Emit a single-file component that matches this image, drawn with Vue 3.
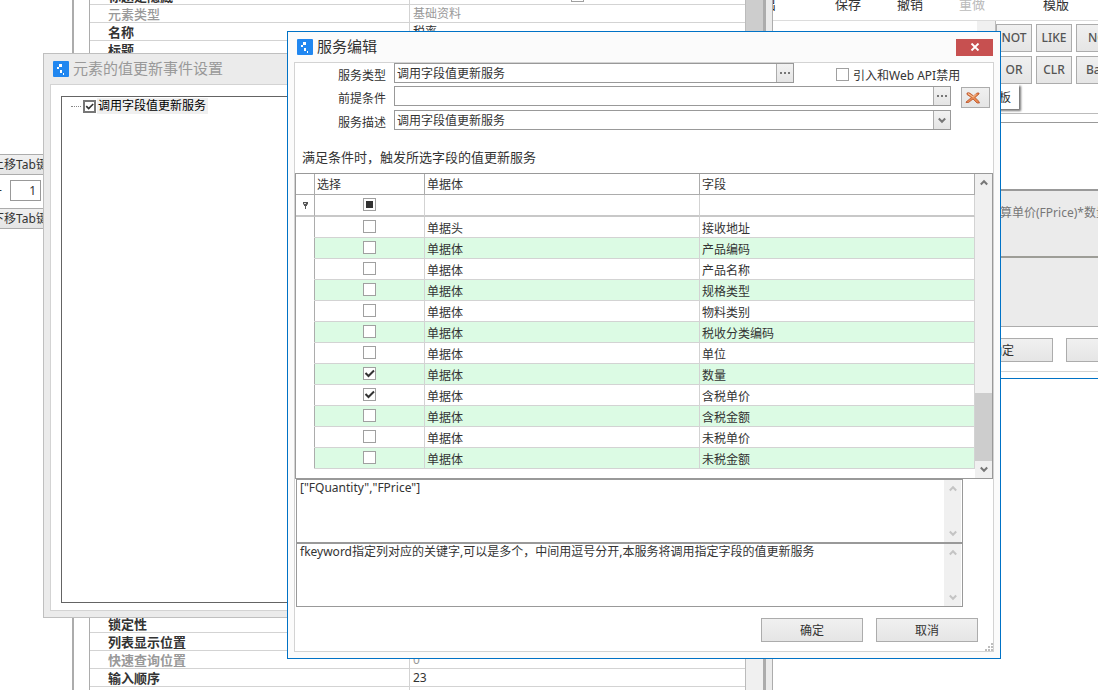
<script setup>
import { ref } from 'vue'

const topProps = [
  { name: '标题是隐藏', value: '', tick: true },
  { name: '元素类型', value: '基础资料', muted: true, light: true },
  { name: '名称', value: '税率' },
  { name: '标题', value: '' }
]
const bottomProps = [
  { name: '锁定性', value: '' },
  { name: '列表显示位置', value: '' },
  { name: '快速查询位置', value: '0', muted: true },
  { name: '输入顺序', value: '23' },
  { name: '', value: '' }
]
const fields = ref([
  { entity: '单据头', field: '接收地址', on: false },
  { entity: '单据体', field: '产品编码', on: false },
  { entity: '单据体', field: '产品名称', on: false },
  { entity: '单据体', field: '规格类型', on: false },
  { entity: '单据体', field: '物料类别', on: false },
  { entity: '单据体', field: '税收分类编码', on: false },
  { entity: '单据体', field: '单位', on: false },
  { entity: '单据体', field: '数量', on: true },
  { entity: '单据体', field: '含税单价', on: true },
  { entity: '单据体', field: '含税金额', on: false },
  { entity: '单据体', field: '未税单价', on: false },
  { entity: '单据体', field: '未税金额', on: false }
])
const serviceType = ref('调用字段值更新服务')
const condition = ref('')
const description = ref('调用字段值更新服务')
const disabledForApi = ref(false)
const treeChecked = ref(true)
const keys = ref('["FQuantity","FPrice"]')
const help = ref('fkeyword指定列对应的关键字,可以是多个，中间用逗号分开,本服务将调用指定字段的值更新服务')
</script>

<template>
  <div class="desktop">
    <div class="workspace">
      <aside class="tab-pane">
        <button class="btn tab-btn">上移Tab键</button>
        <div class="spin"><span>-</span><input type="text" value="1" aria-label="Tab"></div>
        <button class="btn tab-btn">下移Tab键</button>
      </aside>
      <div class="props">
        <div>
          <div v-for="p in topProps" :key="p.name" class="prop" :class="{ muted: p.muted, light: p.light }">
            <div class="pname">{{ p.name }}</div>
            <div class="pvalue">{{ p.value }}<input v-if="p.tick" type="checkbox" class="check" :aria-label="p.name"></div>
          </div>
        </div>
        <div>
          <div v-for="p in bottomProps" :key="p.name" class="prop" :class="{ muted: p.muted }">
            <div class="pname">{{ p.name }}</div>
            <div class="pvalue">{{ p.value }}</div>
          </div>
        </div>
      </div>
      <div class="props-scroll"><div class="props-thumb"></div></div>
      <div class="splitter"></div>
    </div>

    <section class="expr">
      <nav class="tools">
        <button>导出</button>
        <button>保存</button>
        <button>撤销</button>
        <button disabled>重做</button>
        <button class="far">模版</button>
      </nav>
      <div class="expr-head">
        <div class="ops">
          <button class="btn">NOT</button><button class="btn">LIKE</button><button class="btn">NOTIN</button>
          <button class="btn">OR</button><button class="btn">CLR</button><button class="btn">Back</button>
        </div>
        <div class="tip">模板</div>
      </div>
      <div class="expr-edit"></div>
      <div class="expr-text">计算单价(FPrice)*数量</div>
      <div class="expr-note"></div>
      <div class="expr-actions">
        <button class="btn">确定</button>
        <button class="btn">取消</button>
      </div>
    </section>

    <section class="window back">
      <header class="title">
        <svg class="logo" viewBox="0 0 16 16"><rect width="16" height="16" rx="1" fill="#2187f0" /><path d="M6 3h3v3H6zM4 6h2v2H4zM7 9h2v3H7zM10 12h1v2h-1z" fill="#fff" /></svg>
        <h2>元素的值更新事件设置</h2>
      </header>
      <div class="client">
        <div class="tree">
          <label><i class="dots"></i><input v-model="treeChecked" type="checkbox" class="check bold"><span>调用字段值更新服务</span></label>
        </div>
      </div>
    </section>

    <section class="window front">
      <header class="title">
        <svg class="logo" viewBox="0 0 16 16"><rect width="16" height="16" rx="1" fill="#2187f0" /><path d="M6 3h3v3H6zM4 6h2v2H4zM7 9h2v3H7zM10 12h1v2h-1z" fill="#fff" /></svg>
        <h2>服务编辑</h2>
        <button class="close" aria-label="关闭">
          <svg width="10" height="8" viewBox="0 0 10 8"><path d="M1.500 .5 8.500 7.500M8.500 .5 1.500 7.500" stroke="#fff" stroke-width="1.900" /></svg>
        </button>
      </header>
      <div class="client">
        <div class="form">
          <label for="type">服务类型</label>
          <div class="line">
            <div class="combo type"><input id="type" v-model="serviceType" type="text"><button aria-label="选择服务"><i class="ellipsis"></i></button></div>
            <label class="api"><input v-model="disabledForApi" type="checkbox" class="check"><span>引入和Web API禁用</span></label>
          </div>
          <label for="cond">前提条件</label>
          <div class="line">
            <div class="combo"><input id="cond" v-model="condition" type="text"><button aria-label="编辑条件"><i class="ellipsis"></i></button></div>
            <button class="btn clear" aria-label="清除">
              <svg width="16" height="12" viewBox="0 0 16 12"><path d="M2 1Q4 0 6 2l2.500 2L12 1h2v1l-4 3.500 3.500 3.500 1 2h-2.500L8 7 3.500 10.500H1V10l5.500-4.500L2 2.500z" fill="#e9894f" stroke="#b8512a" stroke-width=".8" /><path d="M3 1.500 8.200 5l3.300-3" stroke="#f8c49a" fill="none" /></svg>
            </button>
          </div>
          <label for="desc">服务描述</label>
          <div class="line">
            <div class="combo">
              <select id="desc" v-model="description"><option>调用字段值更新服务</option></select>
              <span class="drop"><svg width="8" height="7" viewBox="0 0 8 7"><path d="M.8 1.500 4 4.800 7.200 1.500" class="chev" /></svg></span>
            </div>
          </div>
        </div>
        <p class="hint">满足条件时，触发所选字段的值更新服务</p>
        <div class="grid">
          <div class="table-area">
            <table>
              <colgroup><col class="c-mark"><col class="c-pick"><col><col></colgroup>
              <thead>
                <tr><th></th><th>选择</th><th>单据体</th><th>字段</th></tr>
                <tr class="filter">
                  <td class="mark"><svg width="7" height="8" viewBox="0 0 7 8"><path d="M1 1h5v2.500H5V5H4v3H3V5H2V3.500H1z" fill="#555" /><path d="M2 2.500h2" stroke="#ddd" /></svg></td>
                  <td class="pick"><input type="checkbox" class="check" aria-label="全选" :indeterminate="true"></td>
                  <td></td><td></td>
                </tr>
              </thead>
              <tbody>
                <tr v-for="f in fields" :key="f.field">
                  <td class="mark"></td>
                  <td class="pick"><input v-model="f.on" type="checkbox" class="check" :aria-label="f.field"></td>
                  <td>{{ f.entity }}</td><td>{{ f.field }}</td>
                </tr>
              </tbody>
            </table>
          </div>
          <div class="bar">
            <svg width="8" height="7" viewBox="0 0 8 7"><path d="M.8 5.500 4 2.200 7.200 5.500" class="chev" /></svg>
            <div class="thumb"></div>
            <svg width="8" height="7" viewBox="0 0 8 7"><path d="M.8 1.500 4 4.800 7.200 1.500" class="chev" /></svg>
          </div>
        </div>
        <div class="memos">
          <div class="memo">
            <textarea v-model="keys" aria-label="字段关键字"></textarea>
            <div class="bar off"><svg width="8" height="7" viewBox="0 0 8 7"><path d="M.8 5.500 4 2.200 7.200 5.500" class="chev" /></svg><svg width="8" height="7" viewBox="0 0 8 7"><path d="M.8 1.500 4 4.800 7.200 1.500" class="chev" /></svg></div>
          </div>
          <div class="memo">
            <textarea v-model="help" aria-label="说明"></textarea>
            <div class="bar off"><svg width="8" height="7" viewBox="0 0 8 7"><path d="M.8 5.500 4 2.200 7.200 5.500" class="chev" /></svg><svg width="8" height="7" viewBox="0 0 8 7"><path d="M.8 1.500 4 4.800 7.200 1.500" class="chev" /></svg></div>
          </div>
        </div>
        <footer class="actions">
          <button class="btn">确定</button>
          <button class="btn">取消</button>
        </footer>
        <svg class="grip" width="8" height="8" viewBox="0 0 8 8"><path d="M6 0h2v2H6zM3 3h2v2H3zM6 3h2v2H6zM0 6h2v2H0zM3 6h2v2H3zM6 6h2v2H6z" fill="#bdbdbd" /></svg>
      </div>
    </section>
  </div>
</template>

<style>
body { margin: 0; background: #fff; }
</style>

<style scoped>
* { box-sizing: border-box; }
.desktop {
  position: relative;
  height: 100vh;
  min-height: 660px;
  overflow: hidden;
  font: 12px/16px "Noto Sans", "Noto Sans CJK SC", sans-serif;
  color: #333;
}
button, input, select, textarea { font: inherit; color: inherit; margin: 0; padding: 0; }
h2, p { margin: 0; font-weight: normal; }
.btn {
  border: 1px solid #acacac;
  background: linear-gradient(#f0f0f0, #e5e5e5);
  white-space: nowrap;
}
.check {
  appearance: none;
  flex: none;
  width: 13px;
  height: 13px;
  border: 1px solid #a0a0a0;
  background: #fff center / 11px 11px no-repeat;
}
.check:checked { background-image: url("data:image/svg+xml,%3Csvg xmlns='http://www.w3.org/2000/svg' viewBox='0 0 11 11'%3E%3Cpath d='M1.500 5 4.500 8 10 2.500' fill='none' stroke='%23333' stroke-width='2'/%3E%3C/svg%3E"); }
.check:indeterminate { background: linear-gradient(#333, #333) center / 7px 7px no-repeat #fff; }
.check.bold { border: 2px solid #777; background-size: 9px 9px; }

/* designer behind the dialogs */
.workspace { display: flex; width: 773px; height: 100%; }
.tab-pane {
  flex: none;
  width: 74px;
  padding-top: 154px;
  border-right: 2px solid #acacac;
  overflow: hidden;
  display: flex;
  flex-direction: column;
  gap: 5px;
}
.tab-btn { width: 88px; height: 21px; margin-left: -24px; }
.spin { display: flex; height: 23px; }
.spin span { width: 12px; margin-left: -2px; line-height: 20px; }
.spin input { width: 31px; height: 21px; border: 1px solid #999; text-align: right; padding-right: 4px; }
.props {
  flex: 1;
  margin-left: 15px;
  border-left: 1px solid #acacac;
  display: flex;
  flex-direction: column;
  justify-content: space-between;
  overflow: hidden;
}
.props > div:first-child { margin-top: -13px; }
.props > div:last-child { margin-bottom: -15px; }
.prop { display: flex; height: 18px; border-bottom: 1px solid #d3d3d3; line-height: 18px; }
.pname { width: 320px; padding-left: 18px; border-right: 1px solid #d3d3d3; font-size: 13px; font-weight: bold; }
.pvalue { flex: 1; padding-left: 3px; }
.pvalue .check { margin: 2px 0 0 158px; }
.muted { color: #999; }
.light .pname { font-weight: 500; }
.props-scroll { width: 18px; background: #f0f0f0; border-left: 1px solid #bbb; }
.props-thumb { height: 50%; background: #cdcdcd; }
.splitter { width: 10px; border: solid #acacac; border-width: 0 1px 0 3px; background: #ebebeb; }

/* expression editor */
.expr {
  position: absolute;
  top: 0;
  left: 773px;
  right: 0;
  border-bottom: 1px solid #0072c6;
  background: #fff;
  overflow: hidden;
}
.tools {
  display: flex;
  gap: 36px;
  height: 21px;
  margin-left: -23px;
  border-bottom: 1px solid #dcdcdc;
  overflow: hidden;
}
.tools button { border: 0; background: none; flex: none; width: 26px; height: 20px; font-size: 13px; line-height: 8px; padding-bottom: 12px; white-space: nowrap; }
.tools button:first-child { margin-right: 23px; }
.tools button:disabled { color: #bbb; }
.tools .far { margin-left: 22px; }
.expr-head { height: 93px; margin-left: 204px; border-left: 18px solid #f0f0f0; border-bottom: 1px solid #bbb; }
.ops {
  display: grid;
  grid-template-columns: repeat(3, 36px);
  gap: 4px;
  padding-top: 3px;
  border-left: 1px solid #bbb;
}
.ops .btn { height: 28px; color: #555; font-weight: 500; border-width: 1px; }
.ops .btn:nth-child(3n) { padding-left: 11px; text-align: left; }
.ops .btn:nth-child(6) { padding-left: 9px; }
.tip { width: 24px; height: 25px; padding: 6px 8px; direction: rtl; white-space: nowrap; background: #fff; box-shadow: 2px 2px 2px #777; }
.expr-edit { height: 69px; margin-top: 8px; border: solid #999; border-width: 1px 0 2px; }
.expr-text { height: 67px; padding: 14px 0 0 215px; background: #ebebeb; border-bottom: 2px solid #9d9d97; color: #777; white-space: nowrap; }
.expr-note { height: 69px; background: #ebebeb; border-bottom: 1px solid #acacac; margin-bottom: 11px; }
.expr-actions { display: flex; gap: 13px; height: 34px; padding-left: 178px; border-bottom: 1px solid #d3d3d3; margin-bottom: 6px; }
.expr-actions .btn { flex: none; width: 102px; height: 24px; padding-top: 2px; }

/* dialog windows */
.window { position: absolute; padding: 0 6px 6px; border: 1px solid #bfbfbf; }
.title { display: flex; align-items: center; gap: 4px; height: 30px; padding-left: 3px; }
.title h2 { flex: 1; font-size: 15px; line-height: 20px; padding-bottom: 2px; }
.logo { width: 16px; height: 16px; }
.client { position: relative; border: 1px solid #d3d3d3; background: #fff; }
.back { left: 43px; top: 53px; right: 300px; background: #ebebeb; color: #999; }
.back .client { padding: 11px 10px 7px; }
.tree { height: 507px; border: 1px solid #646464; color: #000; padding: 1px 8px; }
.tree label { display: flex; align-items: center; height: 16px; }
.tree span { background: #f0f0f0; margin-left: 1px; padding: 0 2px 0 1px; }
.dots { width: 10px; margin: 0 2px 0 1px; border-top: 1px dotted #888; }
.front { left: 287px; top: 31px; right: 97px; background: #fbfbfb; border-color: #0072c6; }
.close { width: 37px; height: 17px; margin-right: 1px; border: 0; background: #c75050; display: grid; place-items: center; }

.form {
  display: grid;
  grid-template-columns: 91px 1fr;
  grid-template-rows: 23px 24px 24px;
  column-gap: 8px;
}
.form > label { text-align: right; line-height: 26px; }
.line { display: flex; position: relative; align-items: flex-start; padding-right: 3px; }
.combo { display: flex; width: 557px; height: 20px; border: 1px solid #999; background: #fff; }
.combo.type { width: 400px; }
.combo input, .combo select { flex: 1; min-width: 0; border: 0; background: none; padding: 2px 2px 0; appearance: none; outline: 0; line-height: 16px; }
.combo button, .drop { width: 17px; height: 18px; border: 0; border-left: 1px solid #acacac; background: linear-gradient(#f2f2f2, #e5e5e5); display: grid; place-items: center; }
.ellipsis { width: 10px; height: 2px; background: repeating-linear-gradient(90deg, #777 0 2px, transparent 2px 4px); }
.api { display: flex; gap: 4px; margin-left: 42px; padding-top: 5px; white-space: nowrap; }
.api span { line-height: 16px; }
.clear { width: 29px; height: 21px; margin: 1px 0 0 10px; padding: 0 0 0 3px; display: flex; align-items: center; }
.chev { fill: none; stroke: #777; stroke-width: 2; }
.hint { padding: 14px 0 7px 7px; font-size: 13px; line-height: 18px; }

.grid { display: flex; border: 1px solid #999; }
.table-area { flex: 1; padding-bottom: 9px; }
table { width: 100%; table-layout: fixed; border-spacing: 0; }
.c-mark { width: 19px; }
.c-pick { width: 110px; }
th, td { height: 21px; padding: 1px 2px 0; text-align: left; font-weight: normal; line-height: 16px; border: solid #d3d3d3; border-width: 0 1px 1px 0; }
th { border-color: #acacac; }
tbody td { padding-top: 3px; }
.filter td { height: 22px; border-bottom: 2px solid #c8c8c8; }
tbody tr:nth-child(even) td { background: #dcfbe4; }
tbody tr td.mark, tbody tr:nth-child(even) td.mark { background: #fff; border-bottom-color: transparent; }
td.mark { padding: 0; text-align: center; border-right-color: #acacac; }
td.mark svg, td.pick .check { display: block; margin: 0 auto; }
td.pick { padding: 0 0 2px; }
.bar { width: 17px; background: #f0f0f0; display: flex; flex-direction: column; justify-content: space-between; align-items: center; padding: 5px 0; }
.thumb { width: 17px; height: 68px; margin: auto 0 5px; background: #cdcdcd; }
.memos { width: 667px; margin-left: 1px; }
.memo { display: flex; height: 64px; padding-right: 1px; border: 1px solid #999; }
.memo textarea { flex: 1; border: 0; outline: 0; resize: none; padding: 0 3px; line-height: 16px; background: none; overflow: hidden; }
.off .chev { stroke: #c4c4c4; }
.actions { display: flex; justify-content: flex-end; gap: 13px; padding: 11px 15px 9px 0; }
.actions .btn { width: 102px; height: 24px; padding-top: 2px; }
.grip { position: absolute; right: 0; bottom: 0; }
</style>
